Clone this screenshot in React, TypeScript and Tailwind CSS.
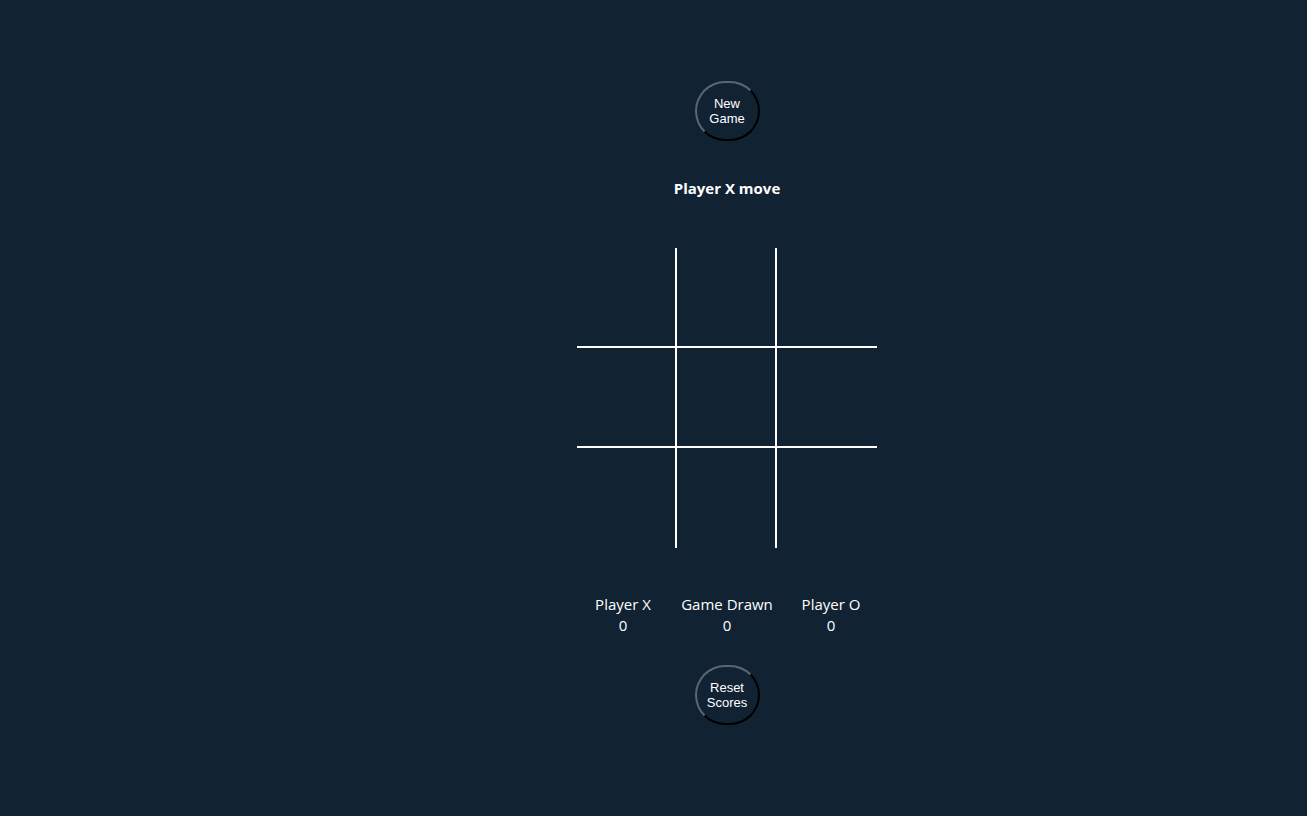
import { useState } from "react";

type Cell = "X" | "O" | null;

const ui = { fontFamily: '"Open Sans", "Noto Sans", sans-serif' };
const btnFont = { fontFamily: '"Liberation Sans", Arial, sans-serif' };

function RoundButton({ label, onClick }: { label: [string, string]; onClick: () => void }) {
  return (
    <button
      onClick={onClick}
      style={btnFont}
      className="flex h-[60px] w-[65px] flex-col items-center justify-center rounded-full border-2 border-t-[#5c6670] border-l-[#5c6670] border-b-black border-r-black bg-transparent text-[13px] leading-[15px] text-white"
    >
      <span>{label[0]}</span>
      <span>{label[1]}</span>
    </button>
  );
}

export default function App() {
  const [board, setBoard] = useState<Cell[]>(Array(9).fill(null));
  const [turn, setTurn] = useState<"X" | "O">("X");
  const [scores] = useState({ x: 0, d: 0, o: 0 });

  const play = (i: number) => {
    if (board[i]) return;
    const next = [...board];
    next[i] = turn;
    setBoard(next);
    setTurn(turn === "X" ? "O" : "X");
  };

  return (
    <div style={ui} className="min-h-screen bg-[#112233] pl-[147px] text-white">
      <div className="flex flex-col items-center pt-[81px]">
        <RoundButton label={["New", "Game"]} onClick={() => setBoard(Array(9).fill(null))} />

        <div className="mt-[37px] text-[15px] font-bold leading-[20px]">Player {turn} move</div>

        <div className="mt-[50px] grid w-[300px] grid-cols-3">
          {board.map((c, i) => {
            const col = i % 3;
            const row = Math.floor(i / 3);
            return (
              <button
                key={i}
                onClick={() => play(i)}
                className={
                  "flex h-[100px] w-[100px] items-center justify-center border-white text-5xl " +
                  (col < 2 ? "border-r-2 " : "") +
                  (row < 2 ? "border-b-2" : "")
                }
              >
                {c}
              </button>
            );
          })}
        </div>

        <div className="mt-[46px] flex text-[15px] leading-[21px]">
          <div className="flex w-[104px] flex-col items-center">
            <span>Player X</span>
            <span>{scores.x}</span>
          </div>
          <div className="flex w-[104px] flex-col items-center">
            <span>Game Drawn</span>
            <span>{scores.d}</span>
          </div>
          <div className="flex w-[104px] flex-col items-center">
            <span>Player O</span>
            <span>{scores.o}</span>
          </div>
        </div>

        <div className="mt-[29px]">
          <RoundButton label={["Reset", "Scores"]} onClick={() => {}} />
        </div>
      </div>
    </div>
  );
}
